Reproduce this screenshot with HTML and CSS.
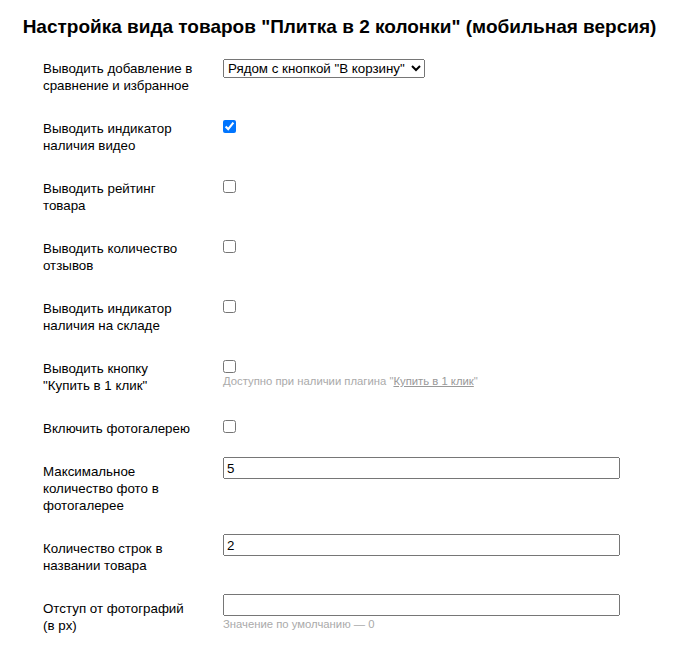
FILE: index.html
```html
<!DOCTYPE html>
<html lang="ru">
	<head>
		<meta charset="UTF-8" />
		<meta name="viewport" content="width=device-width, initial-scale=1.0" />
		<title>Настройка вида товаров</title>
		<link rel="stylesheet" href="styles.css">
	</head>

	<body>
		<h1 class="title">Настройка вида товаров "Плитка в 2 колонки" (мобильная версия)</h1>

		<!--one row per setting: label on the left, control on the right-->
		<div class="settings">
			<div class="row">
				<label class="row__label">Выводить добавление в<br>сравнение и избранное</label>
				<div class="row__control">
					<select class="select">
						<option>Рядом с кнопкой "В корзину"</option>
					</select>
				</div>
			</div>

			<div class="row">
				<label class="row__label">Выводить индикатор<br>наличия видео</label>
				<div class="row__control">
					<input class="check" type="checkbox" checked />
				</div>
			</div>

			<div class="row">
				<label class="row__label">Выводить рейтинг<br>товара</label>
				<div class="row__control">
					<input class="check" type="checkbox" />
				</div>
			</div>

			<div class="row">
				<label class="row__label">Выводить количество<br>отзывов</label>
				<div class="row__control">
					<input class="check" type="checkbox" />
				</div>
			</div>

			<div class="row">
				<label class="row__label">Выводить индикатор<br>наличия на складе</label>
				<div class="row__control">
					<input class="check" type="checkbox" />
				</div>
			</div>

			<div class="row">
				<label class="row__label">Выводить кнопку<br>"Купить в 1 клик"</label>
				<div class="row__control">
					<input class="check" type="checkbox" />
					<p class="hint">Доступно при наличии плагина "<a class="hint__link" href="#">Купить в 1 клик</a>"</p>
				</div>
			</div>

			<div class="row">
				<label class="row__label">Включить фотогалерею</label>
				<div class="row__control">
					<input class="check" type="checkbox" />
				</div>
			</div>

			<div class="row">
				<label class="row__label">Максимальное<br>количество фото в<br>фотогалерее</label>
				<div class="row__control">
					<input class="text" type="text" value="5" />
				</div>
			</div>

			<div class="row">
				<label class="row__label">Количество строк в<br>названии товара</label>
				<div class="row__control">
					<input class="text" type="text" value="2" />
				</div>
			</div>

			<div class="row">
				<label class="row__label">Отступ от фотографий<br>(в px)</label>
				<div class="row__control">
					<input class="text" type="text" value="" />
					<p class="hint">Значение по умолчанию — 0</p>
				</div>
			</div>
		</div>
	</body>
</html>
```

FILE: styles.css
```css
body {
	margin: 0;
	background-color: #fff;
	color: #000;
	font-family: "Liberation Sans", Arial, sans-serif;
	font-size: 13.33px;
	line-height: 17px;
}
.title {
	margin: 15px 0 0;
	font-size: 19px;
	line-height: 23px;
	font-weight: bold;
	text-align: center;
}
.settings {
	padding: 16px 0 0 43px;
}
.row {
	display: grid;
	grid-template-columns: 180px 1fr;
	align-items: start;
	padding-bottom: 20px;
}
.row__label {
	padding-top: 6px;
	white-space: nowrap;
}
.row__control {
	display: flex;
	flex-direction: column;
	align-items: flex-start;
}
.select {
	margin-top: 5px;
	width: 202px;
	height: 19px;
	font: 13.33px "Liberation Sans", Arial, sans-serif;
	color: #000;
	padding: 0;
}
.check {
	margin: 6px 0 0;
	width: 13px;
	height: 13px;
}
.text {
	box-sizing: border-box;
	width: 397px;
	height: 22px;
	margin: 0;
	padding: 1px 2px;
	font: 13.33px "Liberation Sans", Arial, sans-serif;
	color: #000;
}
.hint {
	margin: 2px 0 0;
	font-size: 11.3px;
	line-height: 13px;
	color: #aaa;
}
.hint__link {
	color: #999;
}
```
